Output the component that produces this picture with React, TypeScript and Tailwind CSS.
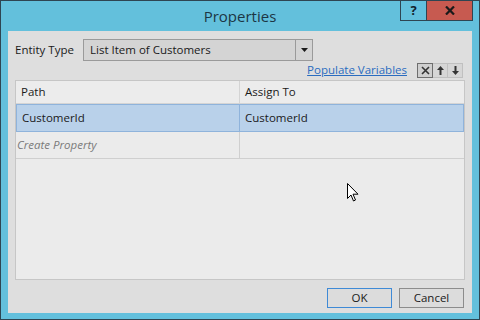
import React from "react";

const font = { fontFamily: '"Open Sans", "Noto Sans", sans-serif' };

function Cursor() {
  return (
    <svg width="12" height="20" viewBox="0 0 12 20" className="absolute left-[339px] top-[152px]">
      <path
        d="M0.5 0.5 L0.5 15.5 L4 12 L6.5 18 L8.5 17 L6 11.2 L11 11.2 Z"
        fill="#ffffff"
        stroke="#000000"
        strokeWidth="1"
      />
    </svg>
  );
}

export default function App() {
  return (
    <div
      className="w-[480px] h-[320px] bg-[#63c0dc] border border-[#2e4552] flex flex-col text-[11.5px] text-[#1a1a1a]"
      style={font}
    >
      <div className="relative h-[30px] flex items-center justify-center shrink-0">
        <span className="text-[15px] text-[#1c3644] mt-[1px]">Properties</span>
        <div className="absolute right-[6px] top-[-1px] flex">
          <div className="w-[27px] h-[21px] border border-[#2e4552] bg-[#63c0dc] flex items-center justify-center text-[13px] font-bold text-[#10202a]">
            ?
          </div>
          <div className="w-[46px] h-[21px] border border-l-0 border-[#2e4552] bg-[#c75a50] flex items-center justify-center">
            <svg width="10" height="9" viewBox="0 0 10 9">
              <path d="M1 0.5 L9 8.5 M9 0.5 L1 8.5" stroke="#1a1a1a" strokeWidth="2.2" />
            </svg>
          </div>
        </div>
      </div>
      <div className="flex-1 mx-[7px] mb-[7px] bg-[#dedede] flex flex-col px-[7px] pt-[8px] pb-[5px] relative">
        <div className="flex items-center h-[22px]">
          <span className="w-[68px] text-[#1a1a1a]">Entity Type</span>
          <div className="w-[230px] h-[22px] border border-[#9a9a9a] bg-[#d4d4d4] flex">
            <div className="flex-1 flex items-center pl-[6px] border-r border-[#9a9a9a]">List Item of Customers</div>
            <div className="w-[16px] flex items-center justify-center">
              <svg width="7" height="4" viewBox="0 0 7 4">
                <path d="M0 0 H7 L3.5 4 Z" fill="#1a1a1a" />
              </svg>
            </div>
          </div>
        </div>
        <div className="flex items-center justify-end h-[18px]">
          <span className="text-[#2a6cc0] underline mr-[10px]">Populate Variables</span>
          <div className="flex mr-[2px] bg-[#d6d6d6]">
            <div className="w-[16px] h-[15px] border border-[#6e6e6e] bg-[#cfcfcf] flex items-center justify-center">
              <svg width="9" height="9" viewBox="0 0 9 9">
                <path d="M1 1 L8 8 M8 1 L1 8" stroke="#333" strokeWidth="1.6" />
              </svg>
            </div>
            <div className="w-[15px] h-[15px] flex items-center justify-center border-y border-r border-[#c0c0c0]">
              <svg width="7" height="9" viewBox="0 0 7 9">
                <path d="M3.5 0 L7 4 H4.5 V9 H2.5 V4 H0 Z" fill="#333" />
              </svg>
            </div>
            <div className="w-[15px] h-[15px] flex items-center justify-center border-y border-r border-[#c0c0c0]">
              <svg width="7" height="9" viewBox="0 0 7 9">
                <path d="M3.5 9 L7 5 H4.5 V0 H2.5 V5 H0 Z" fill="#333" />
              </svg>
            </div>
          </div>
        </div>
        <div className="mt-[1px] h-[200px] border border-[#c6c6c6] bg-[#ebebeb] flex flex-col">
          <div className="flex h-[23px] border-b border-[#d4d4d4] bg-[#ececec]">
            <div className="w-[224px] flex items-center pl-[5px] border-r border-[#d4d4d4]">Path</div>
            <div className="flex-1 flex items-center pl-[5px]">Assign To</div>
          </div>
          <div className="flex h-[28px]">
            <div className="w-[224px] flex items-center pl-[5px] bg-[#b9d1ea] border border-[#8fb3db]">CustomerId</div>
            <div className="flex-1 flex items-center pl-[5px] bg-[#b9d1ea] border border-l-0 border-[#8fb3db]">CustomerId</div>
          </div>
          <div className="flex h-[27px] border-b border-[#cfcfcf]">
            <div className="w-[224px] flex items-center pl-[1px] italic text-[#7a7a7a] border-r border-[#cfcfcf]">Create Property</div>
            <div className="flex-1" />
          </div>
        </div>
        <div className="flex justify-end gap-[7px] mt-[8px] mr-[1px]">
          <button className="w-[65px] h-[20px] border border-[#3f8ad6] bg-[#dcdcdc] flex items-center justify-center">OK</button>
          <button className="w-[65px] h-[20px] border border-[#8c8c8c] bg-[#dcdcdc] flex items-center justify-center">Cancel</button>
        </div>
        <Cursor />
      </div>
    </div>
  );
}
